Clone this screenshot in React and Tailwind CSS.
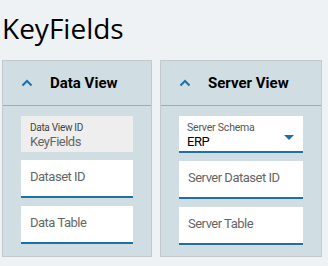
import React from "react";

const narrow = { fontFamily: '"Roboto", sans-serif' };

const Chevron = () => (
  <svg width="12" height="8" viewBox="0 0 12 8" className="shrink-0">
    <path d="M1.5 6.5 L6 2 L10.5 6.5" fill="none" stroke="#1f6fa8" strokeWidth="2" />
  </svg>
);

const Field = ({ placeholder }) => (
  <div
    className="h-[38px] bg-white border-b-2 border-[#1f6fa8] pl-[9px] pt-[7px] text-[13px] tracking-[-0.5px] text-[#666]"
    style={narrow}
  >
    {placeholder}
  </div>
);

const Panel = ({ title, width, children }) => (
  <div className={`${width} bg-[#d0dde2] border border-[#c6c9cb]`}>
    <div className="h-[45px] flex items-center border-b border-[#85b6c6] pl-[18px]">
      <Chevron />
      <span className="ml-[17px] text-[15px] font-bold text-black" style={narrow}>
        {title}
      </span>
    </div>
    <div className="px-[18px] pt-[10px] pb-[11px] flex flex-col gap-[8px]">{children}</div>
  </div>
);

export default function App() {
  return (
    <div
      className="w-[328px] h-[266px] bg-[#eef2f5] overflow-hidden"
      style={{ fontFamily: '"Open Sans", sans-serif' }}
    >
      <h1 className="pl-[2px] pt-[9px] h-[60px] text-[28px] leading-[38px] text-black">KeyFields</h1>
      <div className="flex gap-[8px] pl-[2px]">
        <Panel title="Data View" width="w-[150px]">
          <div className="h-[36px] bg-[#eeeeee] pl-[9px] pt-[7px] leading-none" style={narrow}>
            <div className="text-[10px] tracking-[-0.3px] text-[#444]">Data View ID</div>
            <div className="text-[13px] tracking-[-0.5px] text-[#666] mt-[2px]">KeyFields</div>
          </div>
          <Field placeholder="Dataset ID" />
          <Field placeholder="Data Table" />
        </Panel>
        <Panel title="Server View" width="w-[162px]">
          <div
            className="h-[37px] bg-white border-b-2 border-[#1f6fa8] pl-[8px] pr-[9px] pt-[7px] leading-none flex justify-between"
            style={narrow}
          >
            <div>
              <div className="text-[10.5px] tracking-[-0.2px] text-[#555]">Server Schema</div>
              <div className="text-[13px] tracking-[-0.5px] text-black mt-[1px]">ERP</div>
            </div>
            <svg width="10" height="5" viewBox="0 0 10 5" className="mt-[12px]">
              <path d="M0 0 H10 L5 5 Z" fill="#1f6fa8" />
            </svg>
          </div>
          <Field placeholder="Server Dataset ID" />
          <Field placeholder="Server Table" />
        </Panel>
      </div>
    </div>
  );
}
